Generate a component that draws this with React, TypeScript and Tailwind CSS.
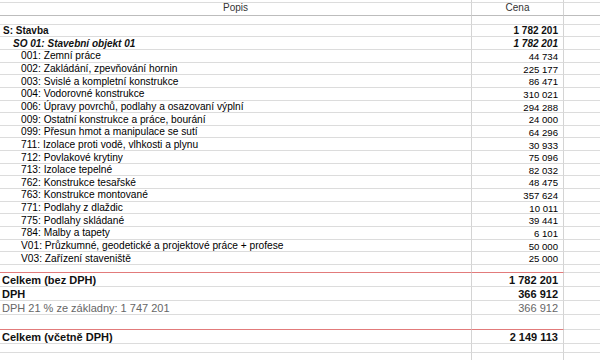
import React from "react";

const items: [string, string][] = [
  ["001: Zemní práce", "44 734"],
  ["002: Zakládání, zpevňování hornin", "225 177"],
  ["003: Svislé a kompletní konstrukce", "86 471"],
  ["004: Vodorovné konstrukce", "310 021"],
  ["006: Úpravy povrchů, podlahy a osazovaní výplní", "294 288"],
  ["009: Ostatní konstrukce a práce, bourání", "24 000"],
  ["099: Přesun hmot a manipulace se sutí", "64 296"],
  ["711: Izolace proti vodě, vlhkosti a plynu", "30 933"],
  ["712: Povlakové krytiny", "75 096"],
  ["713: Izolace tepelné", "82 032"],
  ["762: Konstrukce tesařské", "48 475"],
  ["763: Konstrukce montované", "357 624"],
  ["771: Podlahy z dlaždic", "10 011"],
  ["775: Podlahy skládané", "39 441"],
  ["784: Malby a tapety", "6 101"],
  ["V01: Průzkumné, geodetické a projektové práce + profese", "50 000"],
  ["V03: Zařízení staveniště", "25 000"],
];

function Row({
  h,
  a,
  b,
  aCls = "",
  bCls = "",
  line = "border-[#dcdcdc]",
  lineAB,
}: {
  h: string;
  a?: React.ReactNode;
  b?: React.ReactNode;
  aCls?: string;
  bCls?: string;
  line?: string;
  lineAB?: string;
}) {
  const ab = lineAB ?? line;
  return (
    <div className={`flex ${h}`}>
      <div className={`w-[472px] shrink-0 flex items-end leading-none border-r border-r-[#d4d4d4] border-b ${ab} ${aCls}`}>
        {a}
      </div>
      <div className={`w-[92px] shrink-0 flex items-end justify-end leading-none border-r border-r-[#d4d4d4] border-b ${ab} ${bCls}`}>
        {b}
      </div>
      <div className={`flex-1 border-b ${line}`} />
    </div>
  );
}

export default function App() {
  return (
    <div
      className="w-[600px] h-[360px] overflow-hidden bg-white text-[#111]"
      style={{ fontFamily: '"Liberation Sans", Arial, sans-serif' }}
    >
      <Row h="h-[3px]" />
      <Row
        h="h-[13px]"
        line="border-[#bdbdbd]"
        a={<span className="w-full text-center text-[10px] text-[#333] pb-[2px]">Popis</span>}
        b={<span className="w-full text-center text-[10px] text-[#333] pb-[2px]">Cena</span>}
      />
      <Row h="h-[8.7px]" />
      <Row
        h="h-[12.65px]"
        a={<span className="pl-[3px] text-[10px] font-bold">S: Stavba</span>}
        b={<span className="pr-[5px] text-[10px] font-bold">1 782 201</span>}
      />
      <Row
        h="h-[12.65px]"
        a={<span className="pl-[13px] text-[10px] font-bold italic">SO 01: Stavební objekt 01</span>}
        b={<span className="pr-[5px] text-[10px] font-bold italic">1 782 201</span>}
      />
      {items.map(([t, v]) => (
        <Row
          key={t}
          h="h-[12.65px]"
          a={<span className="pl-[21px] text-[10.2px] text-black">{t}</span>}
          b={<span className="pr-[5px] text-[9.6px] text-black">{v}</span>}
        />
      ))}
      <Row h="h-[8.3px]" lineAB="border-[#e27b7b]" />
      <Row
        h="h-[14px]"
        a={<span className="pl-[2px] text-[11px] font-bold">Celkem (bez DPH)</span>}
        b={<span className="pr-[5px] text-[11px] font-bold">1 782 201</span>}
      />
      <Row
        h="h-[14px]"
        a={<span className="pl-[2px] text-[11px] font-bold">DPH</span>}
        b={<span className="pr-[5px] text-[11px] font-bold">366 912</span>}
      />
      <Row
        h="h-[14px]"
        a={<span className="pl-[2px] text-[11px] text-[#666]">DPH 21 % ze základny: 1 747 201</span>}
        b={<span className="pr-[5px] text-[11px] text-[#666]">366 912</span>}
      />
      <Row h="h-[15px]" lineAB="border-[#e27b7b]" />
      <Row
        h="h-[14px]"
        a={<span className="pl-[2px] text-[11px] font-bold">Celkem (včetně DPH)</span>}
        b={<span className="pr-[5px] text-[11px] font-bold">2 149 113</span>}
      />
      <Row h="h-[9px]" />
      <Row h="h-[9px]" />
    </div>
  );
}
